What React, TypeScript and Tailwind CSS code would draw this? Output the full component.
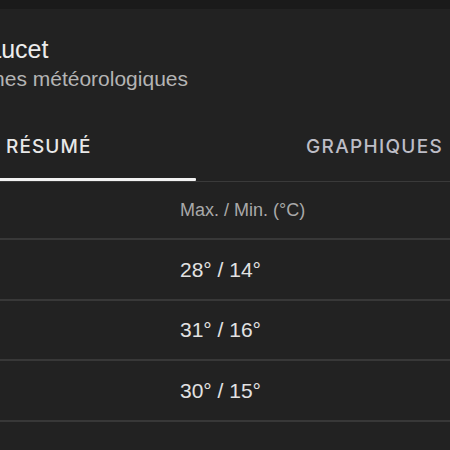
import React from 'react';

const rows = ['28° / 14°', '31° / 16°', '30° / 15°', ''];

export default function App() {
  return (
    <div className="h-[450px] w-[450px] overflow-hidden bg-[#222222] font-['Liberation_Sans',sans-serif]">
      {/* top strip */}
      <div className="h-[9px] bg-[#1a1a1a]" />

      {/* title */}
      <div className="pt-[25px]">
        <div className="-ml-[28px] whitespace-nowrap text-[25px] leading-[30px] text-[#ececec]">Faucet</div>
        <div className="-ml-[70px] mt-[2px] whitespace-nowrap text-[21px] leading-[25px] text-[#b4b4b4]">
          Moyennes météorologiques
        </div>
      </div>

      {/* tabs */}
      <div className="mt-[42px] flex h-[49px] items-start border-b border-[#3a3a3a]">
        <div className="flex h-full w-[196px] flex-col justify-between">
          <div className="pl-[6px] pt-[2px] font-['Inter',sans-serif] text-[19px] font-medium leading-[24px] tracking-[1.1px] text-[#e8e8e8]">
            RÉSUMÉ
          </div>
          <div className="h-[3px] rounded-r-[1px] bg-[#f2f2f2]" />
        </div>
        <div className="flex-1 pr-[7px] pt-[2px] text-right font-['Inter',sans-serif] text-[19px] font-medium leading-[24px] tracking-[1.3px] text-[#bdbdc6]">
          GRAPHIQUES
        </div>
      </div>

      {/* table */}
      <div className="flex h-[58px] items-center border-b-2 border-[#383838] pl-[180px] text-[18px] text-[#a9a9a9]">
        Max. / Min. (°C)
      </div>
      {rows.map((r, i) => (
        <div
          key={i}
          className="flex h-[60.5px] items-center border-b-2 border-[#383838] pl-[180px] text-[21px] text-[#e2e2e2]"
        >
          {r}
        </div>
      ))}
    </div>
  );
}
